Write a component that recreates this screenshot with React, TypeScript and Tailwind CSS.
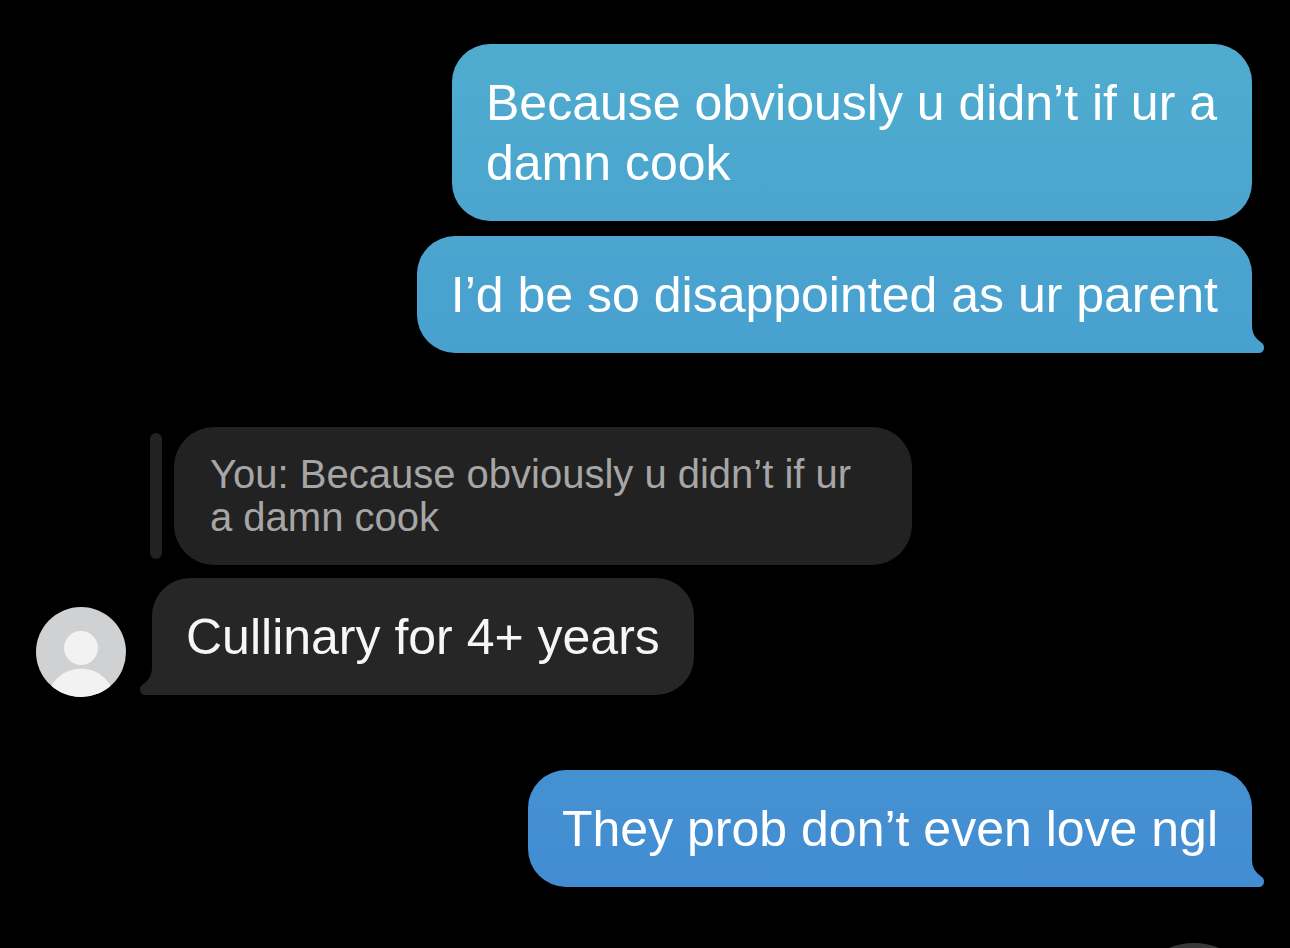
import { clsx } from "clsx";

type BubbleProps = {
  children: string;
  tone: "teal" | "sky" | "blue" | "dark";
  tail?: "left" | "right";
  className?: string;
};

const TONES = {
  teal: { box: "bg-linear-to-b from-[#4facce] to-[#4ba5cf] text-white", tail: "text-[#4ba5cf]" },
  sky: { box: "bg-linear-to-b from-[#4ba5cf] to-[#48a0cf] text-white", tail: "text-[#48a0cf]" },
  blue: { box: "bg-linear-to-b from-[#4491d2] to-[#428dd2] text-white", tail: "text-[#428dd2]" },
  dark: { box: "bg-[#262626] text-[#f6f6f6]", tail: "text-[#262626]" },
};

function Bubble({ children, tone, tail, className }: BubbleProps) {
  return (
    <div
      className={clsx(
        "relative rounded-[38px] px-[34px] pt-[29px] pb-7 text-[50px] leading-[60px]",
        TONES[tone].box,
        tail === "right" && "rounded-br-none",
        tail === "left" && "rounded-bl-none",
        className,
      )}
    >
      <p>{children}</p>
      {tail && (
        <svg
          viewBox="0 0 13 32"
          className={clsx(
            "absolute bottom-0 h-8 w-[13px]",
            TONES[tone].tail,
            tail === "right" ? "-right-3" : "-left-3 -scale-x-100",
          )}
          aria-hidden="true"
        >
          <path
            fill="currentColor"
            d="M0 0H1V4C1 12 4 17 9 20.500C12 22.500 13 24 13 26.500C13 30 11 32 7 32H0Z"
          />
        </svg>
      )}
    </div>
  );
}

function Quote({ children }: { children: string }) {
  return (
    <div className="flex items-center gap-3">
      <span className="my-1.5 w-3 self-stretch rounded-full bg-[#222222]" />
      <blockquote className="max-w-[738px] rounded-[40px] bg-[#222222] px-9 py-[26px] text-[40px] leading-[43px] text-[#a6a6a6]">
        {children}
      </blockquote>
    </div>
  );
}

function Avatar() {
  return (
    <svg viewBox="0 0 90 90" className="size-[90px] shrink-0 rounded-full" role="img" aria-label="Profile photo">
      <rect width="90" height="90" fill="#d0d1d3" />
      <circle cx="45" cy="41" r="17" fill="#f2f2f3" />
      <circle cx="45" cy="95.500" r="34" fill="#f2f2f3" />
    </svg>
  );
}

export default function App() {
  return (
    <main className="relative flex h-screen flex-col overflow-hidden bg-black pt-11 pr-[38px] pl-9 font-['Liberation_Sans',Arial,sans-serif]">
      <section className="flex flex-col items-end gap-[15px]">
        <Bubble tone="teal" className="max-w-[800px]">Because obviously u didn’t if ur a damn cook</Bubble>
        <Bubble tone="sky" tail="right">I’d be so disappointed as ur parent</Bubble>
      </section>

      <section className="mt-[74px] flex flex-col items-start gap-[13px]">
        <div className="pl-[114px]">
          <Quote>You: Because obviously u didn’t if ur a damn cook</Quote>
        </div>
        <div className="flex items-end gap-[26px]">
          <Avatar />
          <div className="pb-0.5">
            <Bubble tone="dark" tail="left">Cullinary for 4+ years</Bubble>
          </div>
        </div>
      </section>

      <section className="mt-[73px] flex flex-col items-end">
        <Bubble tone="blue" tail="right">They prob don’t even love ngl</Bubble>
      </section>

      {/* scroll-to-latest button, mostly below the fold */}
      <button
        type="button"
        aria-label="Scroll to latest"
        className="absolute right-[30px] -bottom-[127px] size-[132px] rounded-full bg-[#383838]"
      />
    </main>
  );
}
